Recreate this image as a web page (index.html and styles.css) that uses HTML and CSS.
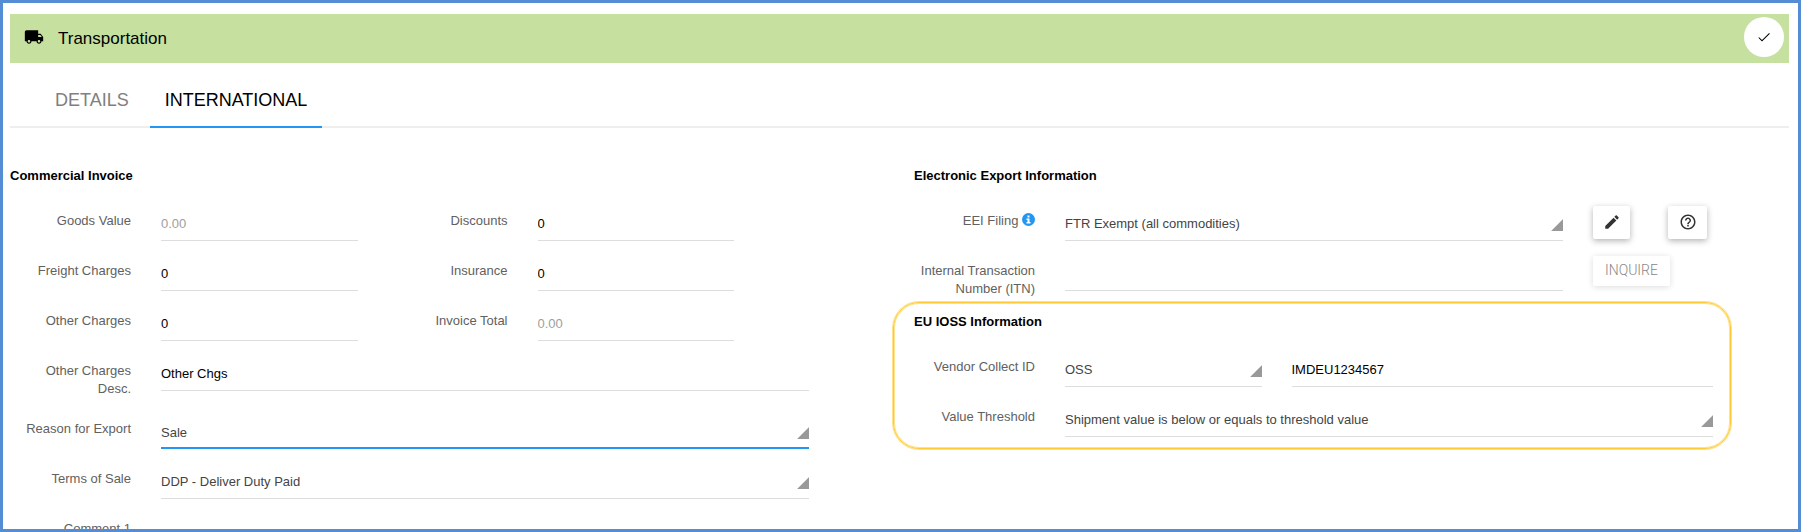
FILE: index.html
```html
<!DOCTYPE html>
<html lang="en">
<head>
<meta charset="utf-8">
<meta name="viewport" content="width=device-width, initial-scale=1">
<title>Transportation</title>
<link rel="stylesheet" href="styles.css">
</head>
<body>
<main class="panel">
  <header class="panel-header">
    <svg class="truck-icon" viewBox="0 0 24 24" aria-hidden="true"><path d="M20 8h-3V4H3c-1.100 0-2 .9-2 2v11h2c0 1.660 1.340 3 3 3s3-1.340 3-3h6c0 1.660 1.340 3 3 3s3-1.340 3-3h2v-5l-3-4zM6 18.500c-.83 0-1.500-.67-1.500-1.500s.67-1.500 1.500-1.500 1.500.67 1.500 1.500-.67 1.500-1.500 1.500zm13.500-9l1.960 2.500H17V9.500h2.500zm-1.500 9c-.83 0-1.500-.67-1.500-1.500s.67-1.500 1.500-1.500 1.500.67 1.500 1.500-.67 1.500-1.500 1.500z"/></svg>
    <h1 class="panel-title">Transportation</h1>
    <button class="confirm-button" type="button" aria-label="Confirm">
      <svg class="check-icon" viewBox="0 0 24 24" aria-hidden="true"><path d="M9 16.600L4.600 12.200l-1.100 1.100L9 18.800 20.800 7l-1.100-1.100z"/></svg>
    </button>
  </header>

  <nav class="tabs">
    <a class="tab" href="#details">DETAILS</a>
    <a class="tab tab-active" href="#international" aria-current="page">INTERNATIONAL</a>
  </nav>

  <form class="columns" id="international">
    <section class="section">
      <h2 class="section-title">Commercial Invoice</h2>
      <div class="fields">
        <label class="label" for="goods">Goods Value</label>
        <input class="control" id="goods" type="text" value="0.00" disabled>
        <label class="label" for="discounts">Discounts</label>
        <input class="control" id="discounts" type="text" value="0">

        <label class="label first" for="freight">Freight Charges</label>
        <input class="control" id="freight" type="text" value="0">
        <label class="label" for="insurance">Insurance</label>
        <input class="control" id="insurance" type="text" value="0">

        <label class="label first" for="other">Other Charges</label>
        <input class="control" id="other" type="text" value="0">
        <label class="label" for="total">Invoice Total</label>
        <input class="control" id="total" type="text" value="0.00" disabled>

        <label class="label first" for="desc">Other Charges Desc.</label>
        <input class="control wide" id="desc" type="text" value="Other Chgs">

        <label class="label first" for="reason">Reason for Export</label>
        <select class="control select wide current" id="reason"><option>Sale</option></select>

        <label class="label first" for="terms">Terms of Sale</label>
        <select class="control select wide" id="terms"><option>DDP - Deliver Duty Paid</option></select>

        <label class="label first" for="comment">Comment 1</label>
        <input class="control wide" id="comment" type="text">
      </div>
    </section>

    <section class="section">
      <h2 class="section-title">Electronic Export Information</h2>
      <div class="fields">
        <label class="label" for="eei">EEI Filing <svg class="info-icon" viewBox="0 0 26 26" aria-hidden="true"><circle cx="13" cy="13" r="13" fill="#2196f3"/><path fill="#fff" d="M11 5h4v4h-4zM9 11h6v7h2v3H9v-3h2v-4H9z"/></svg></label>
        <div class="with-actions wide">
          <select class="control select" id="eei"><option>FTR Exempt (all commodities)</option></select>
          <div class="actions">
            <button class="action edit" type="button" aria-label="Edit">
              <svg class="action-icon" viewBox="0 0 24 24" aria-hidden="true"><path d="M3 17.250V21h3.750L17.810 9.940l-3.750-3.750L3 17.250zM20.710 7.040c.39-.39.39-1.020 0-1.410l-2.340-2.340c-.39-.39-1.020-.39-1.410 0l-1.830 1.830 3.750 3.750 1.830-1.830z"/></svg>
            </button>
            <button class="action help" type="button" aria-label="Help">
              <svg class="action-icon" viewBox="0 0 24 24" aria-hidden="true"><path d="M11 18h2v-2h-2v2zm1-16C6.480 2 2 6.480 2 12s4.480 10 10 10 10-4.480 10-10S17.520 2 12 2zm0 18c-4.410 0-8-3.590-8-8s3.590-8 8-8 8 3.590 8 8-3.590 8-8 8zm0-14c-2.210 0-4 1.790-4 4h2c0-1.100.9-2 2-2s2 .9 2 2c0 2-3 1.750-3 5h2c0-2.250 3-2.500 3-5 0-2.210-1.790-4-4-4z"/></svg>
            </button>
          </div>
        </div>

        <label class="label first" for="itn">Internal Transaction Number (ITN)</label>
        <div class="with-actions wide">
          <input class="control" id="itn" type="text">
          <div class="actions">
            <button class="action inquire" type="button" disabled>INQUIRE</button>
          </div>
        </div>
      </div>

      <section class="highlight">
        <h2 class="section-title">EU IOSS Information</h2>
        <div class="fields">
          <label class="label" for="vendor">Vendor Collect ID</label>
          <select class="control select" id="vendor"><option>OSS</option></select>
          <input class="control rest" type="text" value="IMDEU1234567" aria-label="Vendor Collect ID number">

          <label class="label first" for="threshold">Value Threshold</label>
          <select class="control select wide" id="threshold"><option>Shipment value is below or equals to threshold value</option></select>
        </div>
      </section>
    </section>
  </form>
</main>
</body>
</html>
```
FILE: styles.css
```css
* {
  box-sizing: border-box;
}

body {
  margin: 0;
  background: #fff;
  color: #000;
  font-family: "Liberation Sans", Arial, sans-serif;
  font-size: 13px;
  line-height: 18px;
}

button,
input,
select {
  margin: 0;
  font: inherit;
}

.panel {
  height: 100vh;
  overflow: hidden;
  border: 3px solid #548dd4;
  padding: 11px 9px 0 7px;
}

.panel-header {
  display: flex;
  align-items: center;
  gap: 14px;
  padding: 3px 5px 6px 14px;
  background: #c6e0a0;
}

.truck-icon {
  width: 20px;
  height: 20px;
}

.panel-title {
  flex: 1;
  margin: 0;
  padding-top: 4px;
  font-size: 17px;
  font-weight: 400;
  line-height: 20px;
}

.confirm-button {
  display: grid;
  place-items: center;
  width: 40px;
  height: 40px;
  padding: 0;
  border: 0;
  border-radius: 50%;
  background: #fff;
}

.check-icon {
  width: 16px;
  height: 16px;
}

.tabs {
  display: flex;
  gap: 6px;
  padding: 13px 30px 0;
  box-shadow: inset 0 -2px #eee;
}

.tab {
  padding: 14px 15px 16px;
  border-bottom: 2px solid transparent;
  color: #808080;
  font-size: 18px;
  line-height: 20px;
  text-decoration: none;
}

.tab-active {
  border-color: #2196f3;
  color: #000;
}

.columns {
  display: grid;
  grid-template-columns: 1fr 1fr;
  column-gap: 105px;
  padding: 39px 76px 0 0;
}

.section-title {
  margin: 0 0 6px;
  font-size: 13px;
  font-weight: 700;
}

.fields {
  display: grid;
  grid-template-columns: 121px 1fr 120px 1fr 45px;
  column-gap: 30px;
  grid-auto-rows: minmax(50px, auto);
}

.first {
  grid-column: 1;
}

.wide {
  grid-column: 2 / -1;
}

.rest {
  grid-column: 3 / -1;
}

.label {
  padding: 21px 0 1px;
  color: #616161;
  text-align: right;
}

.info-icon {
  width: 13px;
  height: 13px;
  vertical-align: -1px;
}

.control {
  width: 100%;
  min-width: 0;
  height: 30px;
  margin-top: 20px;
  padding: 0 0 5px;
  border: 0;
  border-bottom: 1px solid #ddd;
  border-radius: 0;
  outline: 0;
  background: transparent;
  color: #000;
}

.control:disabled {
  color: #9e9e9e;
}

.select {
  appearance: none;
  padding-bottom: 3px;
  background: linear-gradient(135deg, transparent 48%, #999 53%) right 8px / 12px 12px no-repeat;
  color: #444;
}

.current {
  padding-bottom: 1px;
  border-bottom: 2px solid #2196f3;
}

.with-actions {
  display: grid;
  grid-template-columns: 1fr 120px;
  column-gap: 30px;
}

.actions {
  display: flex;
  align-items: flex-start;
  gap: 38px;
  padding-top: 15px;
}

.action {
  display: grid;
  place-items: center;
  height: 33px;
  padding: 0 0 2px;
  border: 0;
  border-radius: 2px;
  background: #fff;
  box-shadow: 0 2px 6px rgba(0, 0, 0, 0.3);
  fill: #333;
}

.edit {
  width: 37px;
}

.help {
  width: 39px;
}

.inquire {
  height: 30px;
  padding: 0 12px 2px;
  box-shadow: 0 1px 6px rgba(0, 0, 0, 0.14);
  color: #888;
  font-family: Roboto, sans-serif;
  font-size: 14px;
  font-weight: 300;
}

.action-icon {
  width: 18px;
  height: 18px;
}

.highlight {
  margin: 3px -18px 0 -21px;
  padding: 10px 17px 11px 20px;
  border: 1px solid #ffc933;
  border-radius: 26px;
  box-shadow: 0 0 0 1px #ffe28a, inset 0 0 0 1px #ffe28a;
}
```
